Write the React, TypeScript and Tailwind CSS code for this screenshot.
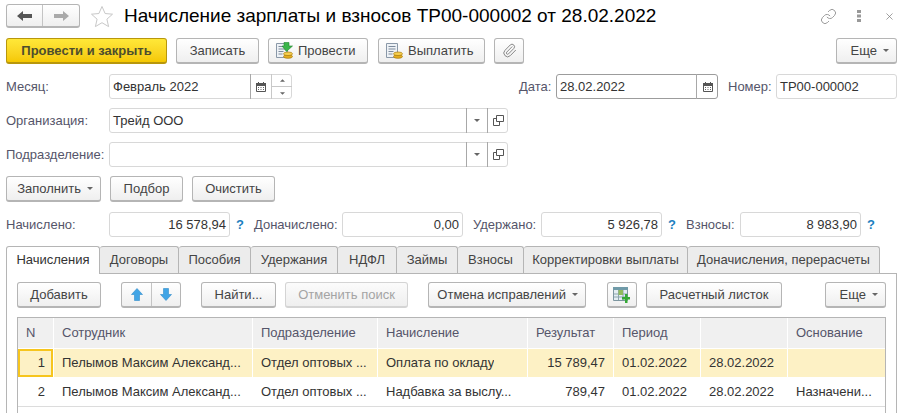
import type { ReactNode } from 'react';
import { Link as LinkIcon, Paperclip, X } from 'lucide-react';

const Caret = ({ small }: { small?: boolean }) => (
  <svg width={small ? 5 : 6} height="3" viewBox="0 0 6 3" className="shrink-0">
    <path d="M0 0h6L3 3z" fill="#666" />
  </svg>
);

const Calendar = () => (
  <svg width="10" height="10" viewBox="0 0 10 10">
    <path d="M0.500 1.500h9v8h-9z" fill="#fff" stroke="#555" />
    <path d="M0 1h10v3H0z" fill="#555" />
    <path d="M2.500 0v2M7.500 0v2" stroke="#555" />
    <path d="M2 5.500h1M4.500 5.500h1M7 5.500h1M2 7.500h1M4.500 7.500h1M7 7.500h1" stroke="#666" />
  </svg>
);

const OpenIcon = () => (
  <svg width="11" height="11" viewBox="0 0 11 11" fill="none" stroke="#555">
    <path d="M3.500 0.500h7v6h-7z" />
    <path d="M3.500 3.500h-3v7h6v-3.500" />
  </svg>
);

const DocIcon = ({ arrow }: { arrow?: boolean }) => (
  <svg width="20" height="18" viewBox="0 0 20 18" className="shrink-0">
    <path d="M1.500 1.500h11v14h-11z" fill="#eef2f6" stroke="#8a98a8" />
    <path d="M3.500 4.500h7M3.500 7h7M3.500 9.500h5M3.500 12h4" stroke="#7c8a9c" />
    <ellipse cx="13" cy="14.500" rx="4.500" ry="1.800" fill="#e3ad1f" stroke="#a8780c" strokeWidth="0.700" />
    <ellipse cx="13" cy="11.800" rx="4.500" ry="1.800" fill="#f6cf4e" stroke="#a8780c" strokeWidth="0.700" />
    {arrow && <path d="M9 0.500h5v3.500h3.500L11.500 9.500 7 4H9z" fill="#3bb54a" stroke="#23852f" strokeWidth="0.600" />}
  </svg>
);

const BlueArrow = ({ down }: { down?: boolean }) => (
  <svg width="12" height="13" viewBox="0 0 12 13" className={down ? 'rotate-180' : ''}>
    <path d="M6 0.500L11.500 6.500H8.500v6h-5v-6H0.500z" fill="#41a5e6" stroke="#2f8bc9" strokeWidth="0.600" />
  </svg>
);

const TableAdd = () => (
  <svg width="18" height="16" viewBox="0 0 18 16">
    <path d="M0.500 0.500h14v13h-14z" fill="#e4edf2" stroke="#7d96a0" />
    <path d="M0 0h15v3H0z" fill="#6f9aa8" />
    <path d="M5.500 3v10M10 3v10M1 7h13M1 10h13" stroke="#8ca5ad" />
    <path d="M5.500 3h4.500v5H5.500z" fill="#8fbb5c" />
    <path d="M12 7h2.500v3H17v2.500h-2.500V16H12v-3.500H9V10h3z" fill="#35a935" />
  </svg>
);

function Btn({
  className = '',
  children,
  primary,
  disabled,
  menu,
  icon,
}: {
  className?: string;
  children: ReactNode;
  primary?: boolean;
  disabled?: boolean;
  menu?: boolean;
  icon?: boolean;
}) {
  const look = primary
    ? 'bg-gradient-to-b from-[#ffe838] to-[#f5c800] border-[#b8970c] text-[#4d4d2d] font-bold'
    : disabled
      ? 'bg-gradient-to-b from-[#fbfbfb] to-[#efefef] border-[#d4d4d4] text-[#a4a4a4]'
      : 'bg-gradient-to-b from-white to-[#efefef] border-[#b5b5b5] text-[#444]';
  const align = menu
    ? 'justify-end gap-[6px] pr-[7px]'
    : icon
      ? 'justify-start gap-[3px] pl-[6px]'
      : 'justify-center';
  return (
    <div className={`flex h-[26px] shrink-0 items-center rounded-[3px] border border-b-2 ${align} ${look} ${className}`}>
      {children}
    </div>
  );
}

function Field({
  className = '',
  children,
  right,
  dark,
}: {
  className?: string;
  children?: ReactNode;
  right?: boolean;
  dark?: boolean;
}) {
  return (
    <div
      className={`flex h-[25px] shrink-0 items-center rounded-[3px] border bg-white text-[#333] ${dark ? 'border-[#9c9c9c]' : 'border-[#d8d8d8]'} ${className}`}
    >
      <span className={`flex-1 truncate px-[3px] ${right ? 'text-right' : ''}`}>{children}</span>
    </div>
  );
}

const Addon = ({ children, className = '' }: { children: ReactNode; className?: string }) => (
  <div className={`flex h-full shrink-0 items-center justify-center border-l border-[#a8a8a8] ${className}`}>{children}</div>
);

const Label = ({ children, className = '' }: { children: ReactNode; className?: string }) => (
  <span className={`shrink-0 text-[#55556a] ${className}`}>{children}</span>
);

const Help = () => <span className="w-6 shrink-0 pl-[6px] font-bold text-[#1d7fc0]">?</span>;

const tabs = [
  { name: 'Договоры', w: 'w-[79px]' },
  { name: 'Пособия', w: 'w-[72px]' },
  { name: 'Удержания', w: 'w-[87px]' },
  { name: 'НДФЛ', w: 'w-[59px]' },
  { name: 'Займы', w: 'w-[61px]' },
  { name: 'Взносы', w: 'w-[66px]' },
  { name: 'Корректировки выплаты', w: 'w-[164px]' },
  { name: 'Доначисления, перерасчеты', w: 'w-[192px]' },
];

const cols = ['w-[35px]', 'w-[198px]', 'w-[124px]', 'w-[149px]', 'w-[85px]', 'w-[86px]', 'w-[86px]', 'w-[97px]'];

function Row({ cells, selected }: { cells: string[]; selected?: boolean }) {
  return (
    <div className={`flex h-[29px] gap-px border-b ${selected ? 'border-white' : 'border-[#dcdcdc]'}`}>
      {cells.map((c, i) => (
        <div
          key={i}
          className={`flex shrink-0 items-center truncate px-2 text-[#333] ${cols[i]} ${i === 0 || i === 4 ? 'justify-end' : ''} ${selected ? 'bg-[#fdf1c5]' : ''} ${selected && i === 0 ? 'border-2 border-[#f6c51e] bg-[#fde28c] px-[6px]' : ''}`}
        >
          <span className="truncate">{c}</span>
        </div>
      ))}
    </div>
  );
}

export default function App() {
  return (
    <div className="h-[413px] w-[905px] overflow-hidden bg-white pt-1 font-['Liberation_Sans',Arial,sans-serif] text-[13px]">
      {/* Заголовок */}
      <div className="flex h-6 items-center pl-[6px] pr-2">
        <div className="flex h-6 w-[74px] rounded-[3px] border border-b-2 border-[#b5b5b5] bg-gradient-to-b from-white to-[#efefef]">
          <div className="flex w-9 items-center justify-center border-r border-[#c4c4c4]">
            <svg width="15" height="10" viewBox="0 0 15 10">
              <path d="M0 5l6-5v3h9v4H6v3z" fill="#555" />
            </svg>
          </div>
          <div className="flex flex-1 items-center justify-center">
            <svg width="15" height="10" viewBox="0 0 15 10">
              <path d="M15 5L9 0v3H0v4h9v3z" fill="#aaa" />
            </svg>
          </div>
        </div>
        <svg width="24" height="23" viewBox="0 0 24 23" className="ml-[10px]">
          <path d="M12 1.500l3.100 7 7.400.700-5.600 5 1.700 7.400L12 17.700l-6.600 3.900 1.700-7.400-5.600-5 7.400-.700z" fill="#fff" stroke="#c8c8c8" />
        </svg>
        <h1 className="ml-[10px] text-[19px] leading-6 whitespace-nowrap text-black">
          Начисление зарплаты и взносов ТР00-000002 от 28.02.2022
        </h1>
        <LinkIcon className="ml-auto mr-[20px] h-[17px] w-[17px] text-[#8a8a8a]" strokeWidth={1.2} />
        <svg width="4" height="12" viewBox="0 0 4 12" className="mr-[23px]">
          <path d="M0 0h4v3H0zM0 4.500h4v3H0zM0 9h4v3H0z" fill="#999" />
        </svg>
        <X className="mr-[2px] h-[11px] w-[11px] text-[#777]" strokeWidth={1.5} />
      </div>

      {/* Командная панель */}
      <div className="mt-[10px] flex h-[26px] gap-[9px] pl-[6px] pr-2 text-[#444]">
        <Btn primary className="w-[161px]">Провести и закрыть</Btn>
        <Btn className="w-[83px]">Записать</Btn>
        <Btn icon className="w-[100px]">
          <DocIcon arrow />
          Провести
        </Btn>
        <Btn icon className="ml-px w-[107px]">
          <DocIcon />
          Выплатить
        </Btn>
        <Btn className="w-[30px]">
          <Paperclip className="h-[15px] w-[15px] text-[#888]" strokeWidth={1.6} />
        </Btn>
        <Btn menu className="ml-auto w-[61px]">
          Еще
          <Caret />
        </Btn>
      </div>

      {/* Месяц, дата, номер */}
      <div className="mt-[10px] flex h-[25px] items-center px-[6px]">
        <Label className="w-[103px]">Месяц:</Label>
        <Field className="w-[183px]">Февраль 2022</Field>
        <div className="relative -ml-[42px] flex h-[25px] w-[42px] shrink-0">
          <Addon className="w-[21px]"><Calendar /></Addon>
          <div className="flex flex-1 flex-col border-l border-[#c8c8c8]">
            <div className="flex flex-1 items-center justify-center border-b border-[#c8c8c8]">
              <div className="flex rotate-180"><Caret small /></div>
            </div>
            <div className="flex flex-1 items-center justify-center"><Caret small /></div>
          </div>
        </div>
        <Label className="ml-[227px] w-[37px]">Дата:</Label>
        <Field dark className="w-[162px]">28.02.2022</Field>
        <div className="relative -ml-[22px] h-[25px] w-[22px] shrink-0">
          <Addon className="w-full"><Calendar /></Addon>
        </div>
        <Label className="ml-[10px] w-[48px]">Номер:</Label>
        <Field className="w-[121px]">ТР00-000002</Field>
      </div>

      {/* Организация */}
      <div className="mt-[9px] flex h-[25px] items-center px-[6px]">
        <Label className="w-[103px]">Организация:</Label>
        <Field className="w-[399px]">Трейд ООО</Field>
        <div className="relative -ml-[42px] flex h-[25px] w-[42px] shrink-0">
          <Addon className="w-[21px]"><Caret /></Addon>
          <Addon className="w-[21px]"><OpenIcon /></Addon>
        </div>
      </div>

      {/* Подразделение */}
      <div className="mt-[9px] flex h-[25px] items-center px-[6px]">
        <Label className="w-[103px]">Подразделение:</Label>
        <Field className="w-[399px]" />
        <div className="relative -ml-[42px] flex h-[25px] w-[42px] shrink-0">
          <Addon className="w-[21px]"><Caret /></Addon>
          <Addon className="w-[21px]"><OpenIcon /></Addon>
        </div>
      </div>

      {/* Заполнение */}
      <div className="mt-[9px] flex h-[26px] gap-[9px] px-[6px]">
        <Btn menu className="w-[95px]">
          Заполнить
          <Caret />
        </Btn>
        <Btn className="w-[73px]">Подбор</Btn>
        <Btn className="w-[83px]">Очистить</Btn>
      </div>

      {/* Итоги */}
      <div className="mt-[10px] flex h-[25px] items-center px-[6px]">
        <Label className="w-[103px]">Начислено:</Label>
        <Field right className="w-[121px]">16 578,94</Field>
        <Help />
        <Label className="w-[88px]">Доначислено:</Label>
        <Field right className="w-[121px]">0,00</Field>
        <Label className="ml-[10px] w-[68px]">Удержано:</Label>
        <Field right className="w-[121px]">5 926,78</Field>
        <Help />
        <Label className="w-[54px]">Взносы:</Label>
        <Field right className="w-[121px]">8 983,90</Field>
        <Help />
      </div>

      {/* Закладки */}
      <div className="mt-[9px] px-[6px]">
        <div className="flex h-[27px]">
          <div className="relative z-10 flex h-[28px] w-[94px] items-center justify-center rounded-t-[3px] border border-b-0 border-[#b5b5b5] bg-white pb-px text-[#333]">
            Начисления
          </div>
          {tabs.map((t) => (
            <div
              key={t.name}
              className={`flex h-[27px] items-center justify-center rounded-t-[3px] border border-l-0 border-b-0 border-[#b5b5b5] bg-[#ececec] text-[#444] ${t.w}`}
            >
              {t.name}
            </div>
          ))}
        </div>
        <div className="h-[200px] w-[891px] border border-[#b5b5b5] px-[10px] pt-2">
          <div className="flex h-[26px]">
            <Btn className="w-[84px]">Добавить</Btn>
            <div className="ml-5 flex h-[26px] w-[60px] rounded-[3px] border border-b-2 border-[#b5b5b5] bg-gradient-to-b from-white to-[#efefef]">
              <div className="flex w-[30px] items-center justify-center border-r border-[#c4c4c4]"><BlueArrow /></div>
              <div className="flex flex-1 items-center justify-center"><BlueArrow down /></div>
            </div>
            <Btn className="ml-5 w-[75px]">Найти...</Btn>
            <Btn disabled className="ml-[9px] w-[123px]">Отменить поиск</Btn>
            <Btn menu className="ml-5 w-[158px]">
              Отмена исправлений
              <Caret />
            </Btn>
            <Btn className="ml-[21px] w-[30px]"><TableAdd /></Btn>
            <Btn className="ml-[9px] w-[136px]">Расчетный листок</Btn>
            <Btn menu className="ml-[43px] w-[61px]">
              Еще
              <Caret />
            </Btn>
          </div>

          <div className="mt-[9px] h-[110px] w-[869px] border border-[#b5b5b5]">
            <div className="flex h-[31px] gap-px border-b border-white">
              {['N', 'Сотрудник', 'Подразделение', 'Начисление', 'Результат', 'Период', '', 'Основание'].map((h, i) => (
                <div key={i} className={`flex shrink-0 items-center bg-[#f0f0f0] px-2 text-[#55556a] ${cols[i]}`}>
                  {h}
                </div>
              ))}
            </div>
            <Row selected cells={['1', 'Пелымов Максим Александ...', 'Отдел оптовых ...', 'Оплата по окладу', '15 789,47', '01.02.2022', '28.02.2022', '']} />
            <Row cells={['2', 'Пелымов Максим Александ...', 'Отдел оптовых ...', 'Надбавка за выслу...', '789,47', '01.02.2022', '28.02.2022', 'Назначени...']} />
          </div>
        </div>
      </div>
    </div>
  );
}
